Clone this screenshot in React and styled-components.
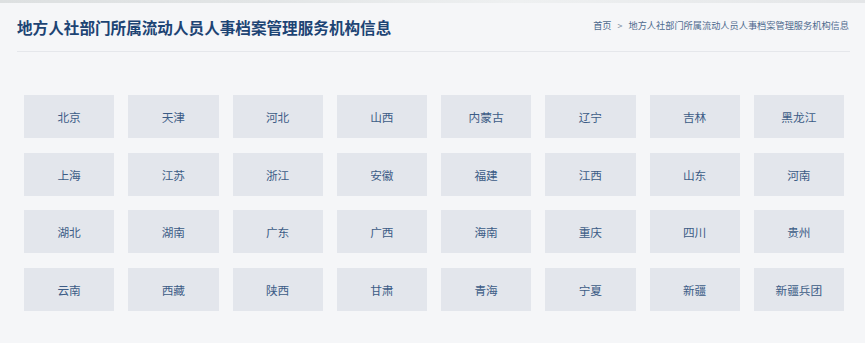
import React from 'react';
import styled, { createGlobalStyle } from 'styled-components';

const GlobalStyle = createGlobalStyle`
  html, body {
    margin: 0;
    padding: 0;
    background: #f5f6f8;
    font-family: "Noto Sans CJK SC", "Noto Sans", sans-serif;
  }
`;

const TopStrip = styled.div`
  height: 3px;
  background: linear-gradient(90deg, #dde0e1 0%, #e2e5e6 30%, #eef0f1 60%, #e4e6e8 100%);
`;

const Page = styled.div`
  padding: 0 15px 0 17px;
`;

const Header = styled.div`
  display: flex;
  align-items: center;
  justify-content: space-between;
  height: 48px;
  border-bottom: 1px solid #e5e7eb;
`;

const Title = styled.h1`
  margin: 0 0 1px;
  font-size: 15.6px;
  font-weight: 700;
  color: #1d4474;
`;

const Crumbs = styled.div`
  display: flex;
  align-items: center;
  gap: 6px;
  font-size: 9.2px;
  color: #4e6a8e;
  margin: 0 1px 4px 0;
`;

const Sep = styled.span`
  font-size: 9px;
  color: #7a8aa0;
`;

const Grid = styled.div`
  display: grid;
  grid-template-columns: repeat(8, 1fr);
  column-gap: 14px;
  row-gap: 14.67px;
  padding: 43px 6px 0 7px;
`;

const Cell = styled.div`
  height: 43px;
  background: #e3e6ec;
  display: flex;
  align-items: center;
  justify-content: center;
  font-size: 11.7px;
  color: #3c5c86;
`;

const regions = [
  '北京', '天津', '河北', '山西', '内蒙古', '辽宁', '吉林', '黑龙江',
  '上海', '江苏', '浙江', '安徽', '福建', '江西', '山东', '河南',
  '湖北', '湖南', '广东', '广西', '海南', '重庆', '四川', '贵州',
  '云南', '西藏', '陕西', '甘肃', '青海', '宁夏', '新疆', '新疆兵团',
];

const App = () => (
  <>
    <GlobalStyle />
    <TopStrip />
    <Page>
      <Header>
        <Title>地方人社部门所属流动人员人事档案管理服务机构信息</Title>
        <Crumbs>
          <span>首页</span>
          <Sep>&gt;</Sep>
          <span>地方人社部门所属流动人员人事档案管理服务机构信息</span>
        </Crumbs>
      </Header>
      <Grid>
        {regions.map((name) => (
          <Cell key={name}>{name}</Cell>
        ))}
      </Grid>
    </Page>
  </>
);

export default App;
